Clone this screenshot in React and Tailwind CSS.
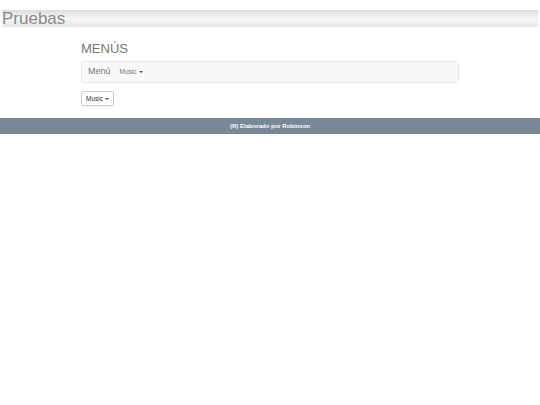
import React from 'react';

const Caret = () => (
    <span className="inline-block w-0 h-0 ml-[2px] align-middle border-t-[2px] border-t-[#555] border-x-[2px] border-x-transparent" />
);

const App = () => {
    return (
        <div className="min-h-[405px] bg-white font-['Liberation_Sans',Arial,sans-serif]">
            <div className="pt-[10px] px-[2px]">
                <div className="h-[17px] flex items-center bg-gradient-to-b from-[#dcdcdc] via-[#f7f7f7] to-[#e6e6e6]">
                    <span className="text-[17px] leading-none text-[#8a8a8a]">Pruebas</span>
                </div>
            </div>

            <div className="w-[378px] mx-auto mt-[15px]">
                <h1 className="text-[13px] leading-none text-[#777] font-normal">MENÚS</h1>
                <nav className="mt-[6px] h-[22px] flex items-center bg-[#f8f8f8] border border-[#e7e7e7] rounded-[2px] px-[6px]">
                    <span className="text-[9px] text-[#777]">Menú</span>
                    <span className="ml-[9px] text-[6.5px] text-[#777] flex items-center">Music<Caret /></span>
                </nav>
                <button className="mt-[8px] h-[15px] px-[4px] flex items-center border border-[#ccc] rounded-[2px] bg-white text-[6.5px] text-[#333]">
                    Music<Caret />
                </button>
            </div>

            <footer className="mt-[12px] h-[16px] bg-[#778899] flex items-center justify-center">
                <span className="text-[6px] font-bold text-white">(R) Elaborado por Robinson</span>
            </footer>
        </div>
    );
};

export default App;
